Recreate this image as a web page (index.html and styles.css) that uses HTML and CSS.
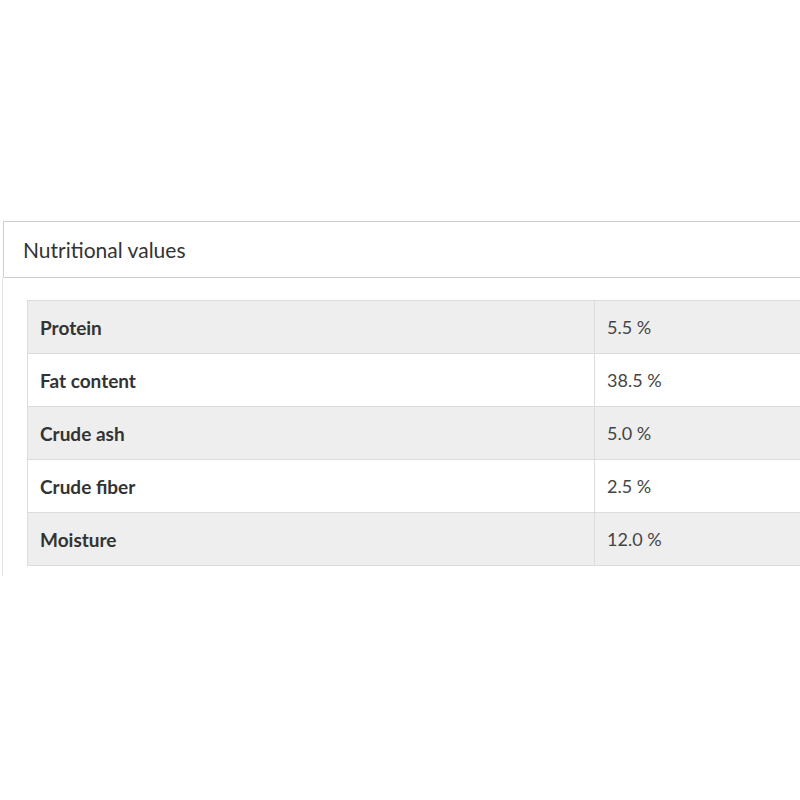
FILE: index.html
```html
<!DOCTYPE html>
<html>
<head>
<meta charset="utf-8">
<link rel="stylesheet" href="styles.css">
</head>
<body>
<div class="panel">
  <div class="panel-head">Nutritional values</div>
  <div class="panel-body">
    <table class="nutri">
      <tr class="odd"><th>Protein</th><td>5.5 %</td></tr>
      <tr><th>Fat content</th><td>38.5 %</td></tr>
      <tr class="odd"><th>Crude ash</th><td>5.0 %</td></tr>
      <tr><th>Crude fiber</th><td>2.5 %</td></tr>
      <tr class="odd"><th>Moisture</th><td>12.0 %</td></tr>
    </table>
  </div>
</div>
</body>
</html>
```
FILE: styles.css
```css
html, body {
  margin: 0;
  padding: 0;
  overflow: hidden;
  background: #fff;
  font-family: Lato, "Open Sans", sans-serif;
}
.panel {
  margin: 221px 0 0 3px;
}
.panel-head {
  border: 1px solid #cfcfcf;
  border-right: none;
  height: 55px;
  line-height: 55px;
  padding-left: 19px;
  font-size: 21px;
  color: #333;
}
.panel-body {
  border-left: 1px solid #e2e2e2;
  margin-left: -1px;
  padding: 22px 0 10px 24px;
}
.nutri {
  border-collapse: collapse;
  width: 100%;
  border-right: hidden;
}
.nutri th, .nutri td {
  border: 1px solid #dcdcdc;
  height: 52px;
  padding: 0 0 0 12px;
  text-align: left;
}
.nutri th {
  width: 554px;
  font-size: 19px;
  font-weight: 700;
  color: #333;
}
.nutri td {
  font-size: 18px;
  font-weight: 400;
  color: #444;
}
.nutri tr.odd {
  background: #eeeeee;
}
```
